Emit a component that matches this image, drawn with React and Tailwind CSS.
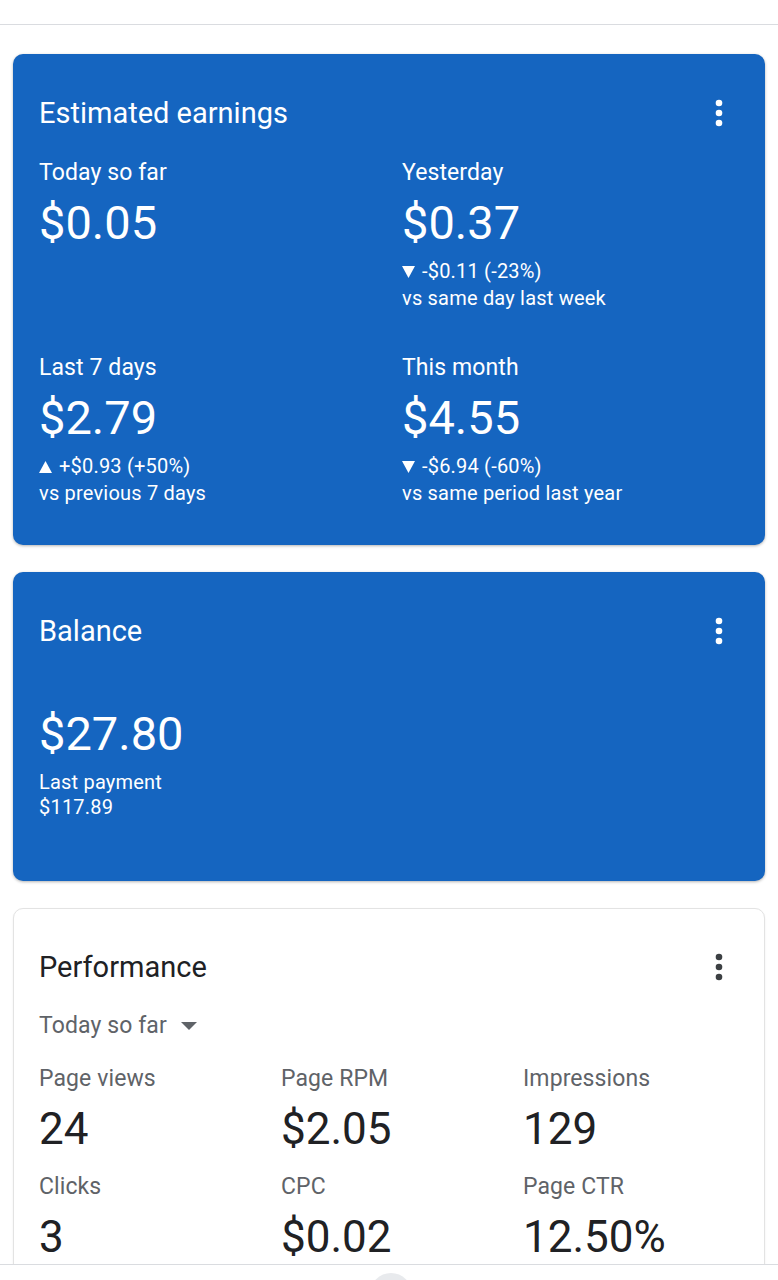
import React from "react";

const Dots = ({ color }) => (
  <svg width="8" height="28" viewBox="0 0 8 28" className="block">
    <circle cx="4" cy="4" r="3.3" fill={color} />
    <circle cx="4" cy="14" r="3.3" fill={color} />
    <circle cx="4" cy="24" r="3.3" fill={color} />
  </svg>
);

const Down = () => (
  <svg width="13" height="12" viewBox="0 0 13 12" className="inline-block mr-[7px] align-[0px]">
    <path d="M0 0 H13 L6.5 12 Z" fill="white" />
  </svg>
);
const Up = () => (
  <svg width="13" height="12" viewBox="0 0 13 12" className="inline-block mr-[7px] align-[0px]">
    <path d="M0 12 H13 L6.5 0 Z" fill="white" />
  </svg>
);

const Stat = ({ label, value, change, up, vs }) => (
  <div className="flex flex-col">
    <div className="text-[23px] leading-[28px] tracking-[0.1px]">{label}</div>
    <div className="mt-[10px] text-[47px] leading-[52px]">{value}</div>
    {change && (
      <div className="mt-[9px] text-[20px] leading-[27px] tracking-[0.2px]">
        <div>
          {up ? <Up /> : <Down />}
          {change}
        </div>
        <div>{vs}</div>
      </div>
    )}
  </div>
);

const Metric = ({ label, value }) => (
  <div className="flex flex-col">
    <div className="text-[23px] leading-[28px] text-[#5f6368] tracking-[0.1px]">{label}</div>
    <div className="mt-[11px] text-[44px] leading-[50px] text-[#202124]">{value}</div>
  </div>
);

export default function App() {
  return (
    <div
      className="relative min-h-[1280px] bg-white overflow-hidden"
      style={{ fontFamily: "Roboto, 'Noto Sans', sans-serif" }}
    >
      <div className="h-[25px] border-b border-[#dadce0] bg-white" />

      <div className="px-[13px] pt-[29px] flex flex-col gap-[27px]">
        {/* Estimated earnings */}
        <div className="rounded-[10px] bg-[#1565c0] text-white shadow-[0_1px_3px_rgba(0,0,0,0.3)] pl-[26px] pt-[41px] pb-[38px]">
          <div className="flex items-center justify-between pr-[42px] h-[36px]">
            <div className="text-[29px] leading-[36px]">Estimated earnings</div>
            <Dots color="white" />
          </div>
          <div className="mt-[28px] grid grid-cols-[363px_1fr] gap-y-[42px]">
            <Stat label="Today so far" value="$0.05" />
            <Stat
              label="Yesterday"
              value="$0.37"
              change="-$0.11 (-23%)"
              vs="vs same day last week"
            />
            <Stat
              label="Last 7 days"
              value="$2.79"
              change="+$0.93 (+50%)"
              up
              vs="vs previous 7 days"
            />
            <Stat
              label="This month"
              value="$4.55"
              change="-$6.94 (-60%)"
              vs="vs same period last year"
            />
          </div>
        </div>

        {/* Balance */}
        <div className="rounded-[10px] bg-[#1565c0] text-white shadow-[0_1px_3px_rgba(0,0,0,0.3)] pl-[26px] pt-[41px] pb-[61px]">
          <div className="flex items-center justify-between pr-[42px] h-[36px]">
            <div className="text-[29px] leading-[36px]">Balance</div>
            <Dots color="white" />
          </div>
          <div className="mt-[59px] text-[47px] leading-[52px]">$27.80</div>
          <div className="mt-[10px] text-[20px] leading-[25px] tracking-[0.2px]">
            <div>Last payment</div>
            <div>$117.89</div>
          </div>
        </div>

        {/* Performance */}
        <div className="rounded-[10px] bg-white border border-[#e3e3e3] shadow-[0_1px_2px_rgba(0,0,0,0.08)] pl-[25px] pt-[40px] pb-[40px]">
          <div className="flex items-center justify-between pr-[41px] h-[36px]">
            <div className="text-[29px] leading-[36px] text-[#202124]">Performance</div>
            <Dots color="#3c4043" />
          </div>
          <div className="mt-[27px] flex items-center text-[23px] leading-[28px] text-[#5f6368] tracking-[0.1px]">
            <span>Today so far</span>
            <svg width="16" height="8" viewBox="0 0 16 8" className="ml-[14px]">
              <path d="M0 0 H16 L8 8 Z" fill="#5f6368" />
            </svg>
          </div>
          <div className="mt-[25px] grid grid-cols-[242px_242px_1fr] gap-y-[19px]">
            <Metric label="Page views" value="24" />
            <Metric label="Page RPM" value="$2.05" />
            <Metric label="Impressions" value="129" />
            <Metric label="Clicks" value="3" />
            <Metric label="CPC" value="$0.02" />
            <Metric label="Page CTR" value="12.50%" />
          </div>
        </div>
      </div>

      {/* bottom bar */}
      <div className="fixed left-0 right-0 top-[1264px] h-[40px] bg-white border-t border-[#dadce0]">
        <div className="absolute left-[370px] top-[8px] w-[42px] h-[42px] rounded-full bg-[#e8eaed]" />
      </div>
    </div>
  );
}
